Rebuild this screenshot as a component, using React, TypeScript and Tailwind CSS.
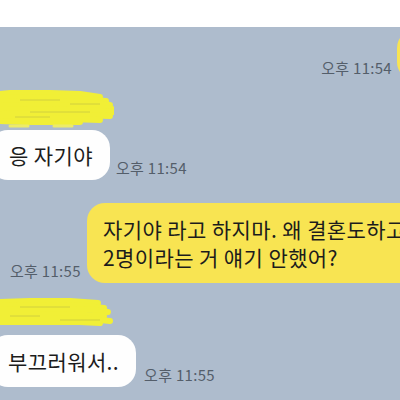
import React from "react";

const font = { fontFamily: '"Noto Sans CJK KR", "Noto Sans", sans-serif' };

function Scribble({ width, height, variant }: { width: number; height: number; variant: 1 | 2 }) {
  const strokes1 = [
    "M0 4 L20 2 L50 3 L80 4 L100 7",
    "M0 8 L30 7 L70 8 L106 11",
    "M0 12 L40 11 L85 12 L110 15",
    "M1 16 L45 15 L95 17 L112 19",
    "M0 20 L50 19 L90 20 L113 22",
    "M2 24 L40 23 L80 25 L110 26",
    "M0 28 L30 28 L70 29 L100 30",
    "M0 31 L25 32 L55 32 L80 32",
  ];
  const strokes2 = [
    "M0 4 L30 3 L70 3 L98 5",
    "M0 8 L40 7 L85 8 L104 10",
    "M1 12 L50 11 L95 12 L108 14",
    "M0 16 L40 16 L85 17 L104 18",
    "M2 20 L50 20 L90 21 L110 23",
    "M0 24 L40 24 L80 24 L100 25",
  ];
  const s = variant === 1 ? strokes1 : strokes2;
  return (
    <svg width={width} height={height} viewBox={`0 0 ${width} ${height}`} className="block">
      {s.map((d, i) => (
        <path key={i} d={d} stroke="#f1ef36" strokeWidth={6} strokeLinecap="round" strokeLinejoin="round" fill="none" />
      ))}
      {variant === 1 ? (
        <>
          <path d="M10 36 L28 36" stroke="#eceb6a" strokeWidth={3} strokeLinecap="round" />
          <path d="M54 36 L72 36" stroke="#eceb6a" strokeWidth={3} strokeLinecap="round" />
          <path d="M20 10 L60 10 M70 14 L100 14 M30 22 L90 22 M15 27 L50 27" stroke="#b8b848" strokeWidth={1} opacity={0.55} />
        </>
      ) : (
        <path d="M10 18 L40 18 M20 9 L70 9 M60 22 L100 22" stroke="#b8b848" strokeWidth={1} opacity={0.55} />
      )}
    </svg>
  );
}

function Time({ children }: { children: React.ReactNode }) {
  return (
    <span className="text-[15px] leading-[18px] tracking-[0.3px] text-[#545e6a] whitespace-nowrap" style={font}>
      {children}
    </span>
  );
}

export default function App() {
  return (
    <div className="w-[400px] h-[400px] overflow-hidden flex flex-col bg-[#aebccd]" style={font}>
      <div className="h-[27px] bg-white shrink-0" />

      {/* Row A: my bubble cut at right */}
      <div className="flex items-end justify-end mt-[3px] shrink-0">
        <div className="mb-[1px]">
          <Time>오후 11:54</Time>
        </div>
        <div className="ml-[5px] mr-[-97px] w-[100px] h-[50px] shrink-0 rounded-[18px] bg-[#f8e452]" />
      </div>

      <div className="mt-[10px] shrink-0">
        <Scribble width={114} height={38} variant={1} />
      </div>

      {/* Row B */}
      <div className="flex items-end mt-[2px] shrink-0">
        <div className="ml-[-10px] pl-[19px] pr-[17px] py-[11px] rounded-[18px] bg-[#fefefe] text-[21px] leading-[28px] tracking-[0.4px] text-[#1c1c1c] whitespace-nowrap">
          응 자기야
        </div>
        <div className="ml-[6px] mb-[1px]">
          <Time>오후 11:54</Time>
        </div>
      </div>

      {/* Row C */}
      <div className="flex items-end mt-[23px] shrink-0">
        <div className="w-[87px] pl-[10px] shrink-0 mb-[1px]">
          <Time>오후 11:55</Time>
        </div>
        <div className="w-[340px] shrink-0 pl-[16px] py-[12px] rounded-[18px] bg-[#f8e452] text-[21px] leading-[28px] tracking-[0.4px] text-[#1c1c1c] whitespace-nowrap">
          <div>자기야 라고 하지마. 왜 결혼도하고</div>
          <div>2명이라는 거 얘기 안했어?</div>
        </div>
      </div>

      <div className="mt-[15px] shrink-0">
        <Scribble width={114} height={28} variant={2} />
      </div>

      {/* Row D */}
      <div className="flex items-end mt-[9px] shrink-0">
        <div className="ml-[-10px] pl-[18px] pr-[17px] py-[12px] rounded-[18px] bg-[#fefefe] text-[21px] leading-[28px] tracking-[0.4px] text-[#1c1c1c] whitespace-nowrap">
          부끄러워서..
        </div>
        <div className="ml-[8px] mb-[1px]">
          <Time>오후 11:55</Time>
        </div>
      </div>
    </div>
  );
}
